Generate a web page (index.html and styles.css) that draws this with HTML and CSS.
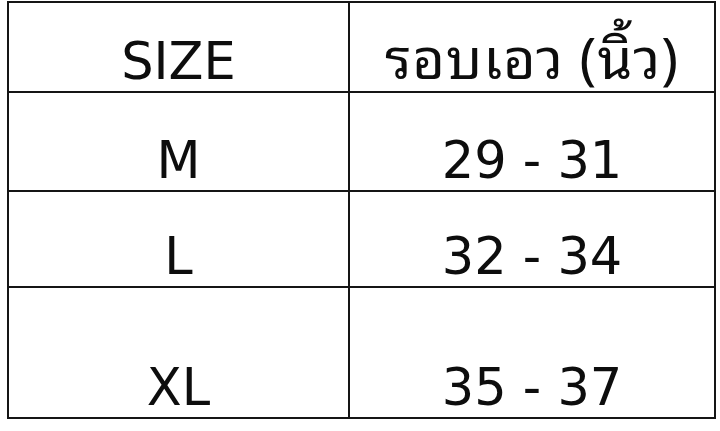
FILE: index.html
```html
<!DOCTYPE html>
<html lang="th">
<head>
<meta charset="utf-8">
<title>Size chart</title>
<link rel="stylesheet" href="styles.css">
</head>
<body>
<table class="chart">
  <tr class="row-head">
    <td class="col-size">SIZE</td>
    <td class="col-waist"><span class="thai">รอบเอว (นิ้ว)</span></td>
  </tr>
  <tr class="row-m">
    <td>M</td>
    <td>29 - 31</td>
  </tr>
  <tr class="row-l">
    <td>L</td>
    <td>32 - 34</td>
  </tr>
  <tr class="row-xl">
    <td>XL</td>
    <td>35 - 37</td>
  </tr>
</table>
</body>
</html>
```
FILE: styles.css
```css
html, body {
  margin: 0;
  padding: 0;
  background: #ffffff;
}
.chart {
  border-collapse: collapse;
  margin: 1px 0 0 7px;
  font-family: "DejaVu Sans", "Noto Sans Thai Looped", "Loma", "Garuda", "Noto Sans Thai", "Noto Sans", sans-serif;
  font-size: 51px;
  color: #0d0d0d;
  table-layout: fixed;
}
.chart td {
  border: 2px solid #151515;
  text-align: center;
  vertical-align: bottom;
  padding: 0 0 4px 0;
  line-height: 1;
  white-space: nowrap;
}
.thai {
  font-family: "Noto Sans Thai Looped", "Loma", "Garuda", "Tahoma", "DejaVu Sans", "Noto Sans Thai", sans-serif;
  font-size: 56px;
  letter-spacing: 1px;
}
.col-size { width: 339px; }
.col-waist { width: 364px; }
.row-head td { height: 84px; }
.row-m td { height: 93px; }
.row-l td { height: 90px; }
.row-xl td { height: 125px; }
```
